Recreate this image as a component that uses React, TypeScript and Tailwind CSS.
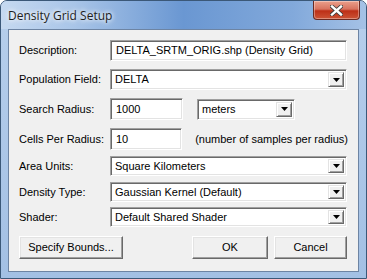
import React from "react";

const sunken =
  "border border-t-[#a0a0a0] border-l-[#a0a0a0] border-r-white border-b-white shadow-[inset_1px_1px_0_#696969,inset_-1px_-1px_0_#e3e3e3] bg-white";

function TextBox({ value, className }: { value: string; className: string }) {
  return (
    <div className={`${sunken} ${className} flex items-center pl-[5px]`}>
      <span>{value}</span>
    </div>
  );
}

function Combo({ value, className }: { value: string; className: string }) {
  return (
    <div className={`${sunken} ${className} flex items-center p-[2px]`}>
      <span className="flex-1 pl-[2px]">{value}</span>
      <div className="h-full w-[16px] bg-[#f0f0f0] border border-t-[#e3e3e3] border-l-[#e3e3e3] border-r-[#696969] border-b-[#696969] shadow-[inset_1px_1px_0_#fff,inset_-1px_-1px_0_#a0a0a0] flex items-center justify-center">
        <svg width="7" height="4" viewBox="0 0 7 4">
          <path d="M0 0h7L3.5 4z" fill="#000" />
        </svg>
      </div>
    </div>
  );
}

function Btn({ label, className }: { label: string; className: string }) {
  return (
    <div
      className={`${className} flex items-center justify-center bg-[#f0f0f0] border border-t-white border-l-white border-r-[#696969] border-b-[#696969] shadow-[inset_-1px_-1px_0_#a0a0a0,inset_1px_1px_0_#e3e3e3]`}
    >
      {label}
    </div>
  );
}

function Row({ label, children, h, mt }: { label: string; children: React.ReactNode; h: string; mt: string }) {
  return (
    <div className={`flex items-center ${h} ${mt}`}>
      <div className="w-[91px] shrink-0">{label}</div>
      {children}
    </div>
  );
}

export default function App() {
  return (
    <div className="w-[367px] h-[279px] overflow-hidden bg-white">
      <div
        className="w-[367px] h-[279px] rounded-t-[7px] border border-[#3b5878] bg-gradient-to-b from-[#b7cfec] to-[#a3c0e4] flex flex-col"
        style={{ fontFamily: "'Liberation Sans', Arial, sans-serif" }}
      >
        <div className="h-[28px] shrink-0 flex items-start relative rounded-t-[6px] bg-[linear-gradient(90deg,#c6d9f0_0%,#a9c5e8_20%,#6a97d2_50%,#82a9db_80%,#a5c2e6_100%)]">
          <div
            className="pl-[7px] pt-[6px] text-[12px] text-[#1e1e1e] [text-shadow:0_0_6px_#ffffff,0_0_4px_#ffffff]"
            style={{ fontFamily: "'Open Sans', 'Noto Sans', sans-serif" }}
          >
            Density Grid Setup
          </div>
          <div className="absolute left-[312px] top-0 w-[47px] h-[19px] rounded-b-[4px] border border-t-0 border-[#6b2a22] bg-[linear-gradient(180deg,#eba08c_0%,#d8735f_45%,#bd2f17_55%,#cc5436_100%)] flex items-center justify-center shadow-[inset_0_0_0_1px_rgba(255,255,255,0.35)]">
            <svg width="13" height="11" viewBox="0 0 13 11">
              <path d="M2 1.5 L11 9.5 M11 1.5 L2 9.5" stroke="#3a3a3a" strokeWidth="4" strokeLinecap="square" />
              <path d="M2 1.5 L11 9.5 M11 1.5 L2 9.5" stroke="#ffffff" strokeWidth="2.4" strokeLinecap="square" />
            </svg>
          </div>
        </div>
        <div className="mx-[7px] h-[243px] border border-[#6d84a3] bg-[#f0f0f0] text-[11px] text-black px-[10px] flex flex-col whitespace-nowrap">
          <Row label="Description:" h="h-[21px]" mt="mt-[10px]">
            <TextBox value="DELTA_SRTM_ORIG.shp (Density Grid)" className="w-[237px] h-[21px]" />
          </Row>
          <Row label="Population Field:" h="h-[21px]" mt="mt-[8px]">
            <Combo value="DELTA" className="w-[237px] h-[21px]" />
          </Row>
          <Row label="Search Radius:" h="h-[22px]" mt="mt-[8px]">
            <TextBox value="1000" className="w-[73px] h-[22px]" />
            <Combo value="meters" className="ml-[14px] w-[98px] h-[21px]" />
          </Row>
          <Row label="Cells Per Radius:" h="h-[22px]" mt="mt-[8px]">
            <TextBox value="10" className="w-[73px] h-[22px]" />
            <span className="ml-[13px]">(number of samples per radius)</span>
          </Row>
          <Row label="Area Units:" h="h-[20px]" mt="mt-[6px]">
            <Combo value="Square Kilometers" className="w-[237px] h-[20px]" />
          </Row>
          <Row label="Density Type:" h="h-[20px]" mt="mt-[6px]">
            <Combo value="Gaussian Kernel (Default)" className="w-[237px] h-[20px]" />
          </Row>
          <Row label="Shader:" h="h-[20px]" mt="mt-[5px]">
            <Combo value="Default Shared Shader" className="w-[237px] h-[20px]" />
          </Row>
          <div className="flex h-[23px] mt-[9px]">
            <Btn label="Specify Bounds..." className="w-[104px] h-[23px]" />
            <Btn label="OK" className="ml-[69px] w-[76px] h-[23px]" />
            <Btn label="Cancel" className="ml-[6px] w-[73px] h-[23px]" />
          </div>
        </div>
      </div>
    </div>
  );
}
